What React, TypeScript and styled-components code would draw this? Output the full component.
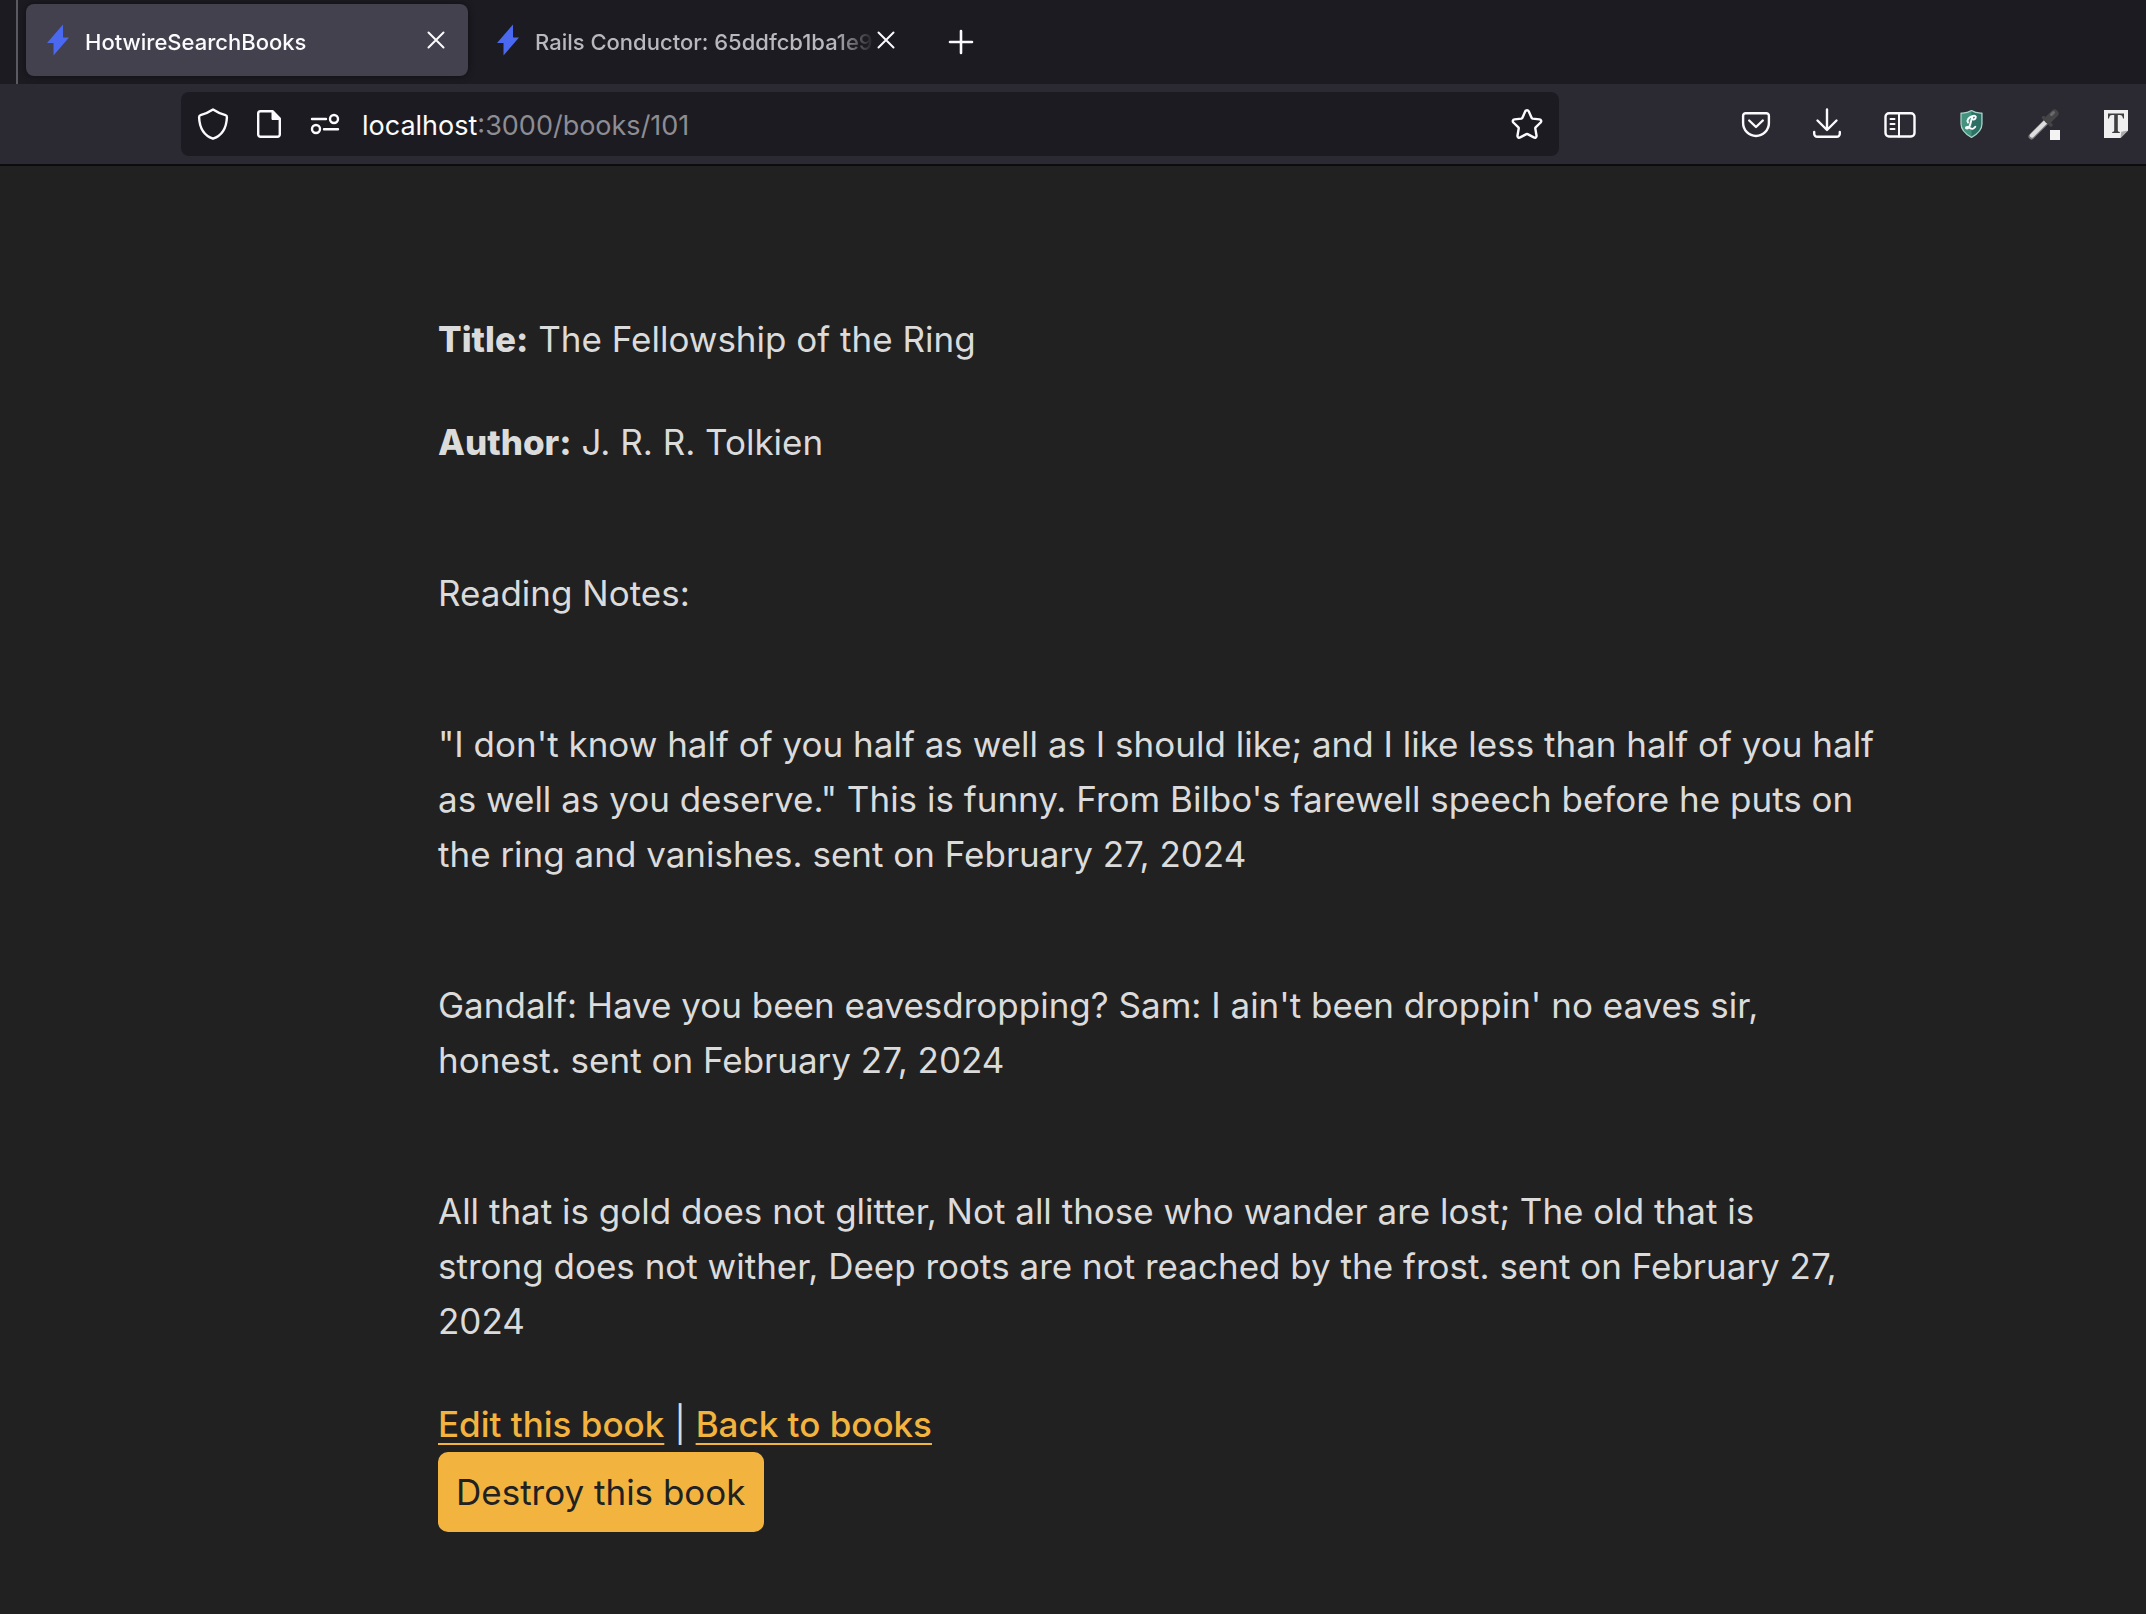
import React from "react";
import styled, { createGlobalStyle } from "styled-components";

const color = {
  frame: "#1c1b22",
  toolbar: "#2b2a33",
  tab: "#42414d",
  chromeText: "#fbfbfe",
  chromeMuted: "#b9b8bf",
  urlMuted: "#8d8d93",
  page: "#212121",
  text: "#dbdbdb",
  accent: "#f3b43f",
  bolt: "#4a69f0",
};

const GlobalStyle = createGlobalStyle`
  *, *::before, *::after { box-sizing: border-box; }
  body {
    margin: 0;
    background: ${color.page};
    color: ${color.text};
    font-family: Inter, "Liberation Sans", sans-serif;
  }
  button, input { font: inherit; color: inherit; }
`;

const Browser = styled.div`
  display: flex;
  flex-direction: column;
  min-height: 100vh;
  overflow-x: hidden;
`;

const TabStrip = styled.div`
  display: flex;
  height: 84px;
  padding-left: 16px;
  background: ${color.frame};
`;

const TabList = styled.div`
  display: flex;
  gap: 8px;
  padding: 4px 8px 8px;
  border-left: 2px solid #5b5a63;
`;

const Tab = styled.div<{ $active?: boolean }>`
  display: flex;
  align-items: center;
  gap: 11px;
  flex: 0 1 442px;
  width: 442px;
  height: 72px;
  padding: 0 16px;
  border-radius: 8px;
  background: ${(p) => (p.$active ? color.tab : "transparent")};
  box-shadow: ${(p) => (p.$active ? "0 0 6px rgba(0, 0, 0, 0.5)" : "none")};
  color: ${(p) => (p.$active ? color.chromeText : color.chromeMuted)};
`;

const TabTitle = styled.span`
  flex: 1;
  min-width: 0;
  margin-right: -16px;
  padding-top: 3px;
  overflow: hidden;
  white-space: nowrap;
  font-size: 22px;
  font-weight: 450;
  line-height: 32px;
  mask-image: linear-gradient(to left, transparent, #000 40px);
`;

const IconButton = styled.button<{ $width: number }>`
  display: flex;
  flex: none;
  align-items: center;
  justify-content: center;
  width: ${(p) => p.$width}px;
  padding: 0;
  border: 0;
  background: none;
  color: ${color.chromeText};
`;

const Toolbar = styled.div`
  display: flex;
  align-items: stretch;
  height: 82px;
  padding: 8px 0 8px 181px;
  border-bottom: 2px solid #0c0c0d;
  background: ${color.toolbar};
`;

const UrlBar = styled.div`
  display: flex;
  flex: 1;
  gap: 24px;
  min-width: 0;
  padding: 0 16px;
  border-radius: 8px;
  background: ${color.frame};
`;

const Address = styled.div`
  display: flex;
  flex: 1;
  align-items: center;
  min-width: 0;
  margin-left: -3px;
  padding-top: 3px;
  font-size: 27px;
  line-height: 32px;
`;

const Host = styled.label`
  color: ${color.chromeText};
`;

const UrlInput = styled.input`
  flex: 1;
  min-width: 0;
  padding: 0;
  border: 0;
  outline: 0;
  background: none;
  color: ${color.urlMuted};
`;

const Extensions = styled.div`
  display: flex;
  gap: 12px;
  margin-left: 167px;
`;

const Page = styled.main`
  padding: 146px 266px 82px 438px;
  font-size: 35px;
  line-height: 55px;
`;

const Field = styled.p`
  margin: 0 0 48px;
`;

const FieldName = styled.strong`
  font-weight: 800;
`;

const Notes = styled.section`
  display: grid;
  gap: 96px;
  margin: 96px 0 48px;
`;

const Note = styled.p`
  margin: 0;
`;

const Link = styled.a`
  color: ${color.accent};
  font-weight: 500;
  text-decoration: underline;
  text-decoration-thickness: 2px;
  text-underline-offset: 6px;
  text-decoration-skip-ink: none;
`;

const DestroyButton = styled.button`
  display: block;
  height: 80px;
  padding: 0 18px;
  border: 0;
  border-radius: 10px;
  background: ${color.accent};
  color: ${color.page};
`;

const Icon = styled.svg`
  flex: none;
`;

const Glyph = ({ children }: { children: React.ReactNode }) => (
  <Icon
    width="32"
    height="32"
    viewBox="0 0 32 32"
    fill="none"
    stroke="currentColor"
    strokeWidth="2.4"
    strokeLinecap="round"
    strokeLinejoin="round"
    aria-hidden="true"
  >
    {children}
  </Icon>
);

const Bolt = () => (
  <Glyph>
    <path
      d="M21 .5 5 19h6.500v12.500L27 13.500h-6z"
      fill={color.bolt}
      stroke="none"
    />
  </Glyph>
);

const Cross = () => (
  <Glyph>
    <path d="m8.500 8.500 15 15m0-15-15 15" strokeWidth="2" />
  </Glyph>
);

const BrowserTab = ({ title, active }: { title: string; active?: boolean }) => (
  <Tab $active={active} role="tab" aria-selected={!!active}>
    <Bolt />
    <TabTitle>{title}</TabTitle>
    <IconButton $width={32} aria-label="Close tab">
      <Cross />
    </IconButton>
  </Tab>
);

const notes = [
  "\"I don't know half of you half as well as I should like; and I like less than half of you half as well as you deserve.\" This is funny. From Bilbo's farewell speech before he puts on the ring and vanishes. sent on February 27, 2024",
  "Gandalf: Have you been eavesdropping? Sam: I ain't been droppin' no eaves sir, honest. sent on February 27, 2024",
  "All that is gold does not glitter, Not all those who wander are lost; The old that is strong\u00a0does not wither, Deep roots are not reached by the frost. sent on February 27, 2024",
];

export default function App() {
  return (
    <Browser>
      <GlobalStyle />
      <TabStrip>
        <TabList role="tablist">
          <BrowserTab title="HotwireSearchBooks" active />
          <BrowserTab title="Rails Conductor: 65ddfcb1ba1e9" />
        </TabList>
        <IconButton $width={70} aria-label="New tab">
          <Glyph>
            <path d="M16 5v22M5 16h22" strokeWidth="2.600" />
          </Glyph>
        </IconButton>
      </TabStrip>

      <Toolbar>
        <UrlBar>
          <IconButton $width={32} aria-label="Tracking protection">
            <Glyph>
              <path d="M16 1.500c4 2.700 8.500 4.500 12.500 5.700 1 .3 1.500 1 1.400 2C29.500 20 25 27.500 16 30.700 7 27.500 2.500 20 2.100 9.200c0-1 .4-1.700 1.400-2C7.500 6 12 4.200 16 1.500z" />
            </Glyph>
          </IconButton>
          <IconButton $width={32} aria-label="Page information">
            <Glyph>
              <path d="M19.500 3.200H7.500a2.300 2.300 0 0 0-2.300 2.300v21a2.300 2.300 0 0 0 2.300 2.300h17a2.300 2.300 0 0 0 2.300-2.300V10.500z" />
              <path d="M19 3v8.500h8z" fill="currentColor" strokeWidth="1" />
            </Glyph>
          </IconButton>
          <IconButton $width={32} aria-label="Site permissions">
            <Glyph>
              <circle cx="25" cy="11" r="4" />
              <circle cx="7" cy="21" r="4" />
              <path d="M3 11h14M15 21.300h14" />
            </Glyph>
          </IconButton>
          <Address>
            <Host htmlFor="address">localhost</Host>
            <UrlInput id="address" type="text" defaultValue=":3000/books/101" />
          </Address>
          <IconButton $width={32} aria-label="Bookmark this page">
            <Glyph>
              <path d="M14.300 3.300c.7-1.500 2.700-1.500 3.400 0l3 6.600c.2.400.5.600.9.700l6.900.8c1.700.2 2.300 2 1.100 3.100l-5 4.900c-.3.300-.4.700-.3 1.100l1.200 7c.3 1.700-1.300 2.700-2.700 1.900l-6.200-3.300c-.4-.2-.8-.2-1.200 0l-6.200 3.300c-1.400.8-3-.2-2.700-1.900l1.200-7c.1-.4 0-.8-.3-1.100l-5-4.900c-1.200-1.100-.6-2.900 1.100-3.100l6.900-.8c.4-.1.700-.3.900-.7z" />
            </Glyph>
          </IconButton>
        </UrlBar>

        <Extensions>
          <IconButton $width={60} aria-label="Save to Pocket">
            <Glyph>
              <path d="M5.700 5.200h20.600a2.600 2.600 0 0 1 2.600 2.600v7.300a12.900 12.900 0 0 1-25.800 0V7.800a2.600 2.600 0 0 1 2.600-2.600z" />
              <path d="m9.200 12.500 6.800 6.500 6.800-6.500" />
            </Glyph>
          </IconButton>
          <IconButton $width={60} aria-label="Downloads">
            <Glyph>
              <path d="M15 1.500v20M5.500 12.500l9.500 9.500 9.500-9.500M2.200 24v1.800a3 3 0 0 0 3 3h19.600a3 3 0 0 0 3-3V24" />
            </Glyph>
          </IconButton>
          <IconButton $width={60} aria-label="Sidebars">
            <Glyph>
              <rect x="1.500" y="5.200" width="29" height="23.300" rx="3.500" />
              <path d="M15 5v23.500" strokeWidth="2" />
              <path d="M6.500 11h4M6.500 16h4M6.500 21h4" strokeWidth="2" />
            </Glyph>
          </IconButton>
          <IconButton $width={60} aria-label="LeechBlock">
            <Glyph>
              <path
                d="M15.500 2.500c3 2 7 2.700 10.500 2.500v11c0 6-4.500 10-10.500 13.500C9.500 26 5 22 5 16V5c3.500.2 7.500-.5 10.500-2.500z"
                fill="#44937f"
                stroke="#a9d6ca"
                strokeWidth="1.200"
              />
              <path
                d="M15.500 3.500c3 1.800 6.500 2.400 9.500 2.400V16c0 5.500-4 9-9.500 12.300z"
                fill="#2d6f64"
                stroke="none"
              />
              <path
                d="M12 14.500c-1.500-2.500.8-5 4.200-6.300 2.600-1 4.300 0 3.400 1.800-.6 1.200-1.800 1.600-2.600 1.300M17 8.200c-2.200 2.200-1.600 8-4.400 11.500-1 1.300-2.700 1.200-2.700.1s2-1.300 4 .2 3.800 1.100 5.400-1.200"
                strokeWidth="1.900"
              />
            </Glyph>
          </IconButton>
          <IconButton $width={60} aria-label="Color picker">
            <Glyph>
              <path d="M3.500 28.500 18 14" stroke="#7d7d80" strokeWidth="6" />
              <path d="M4 27.500 18 13.500" stroke="#dedede" strokeWidth="4.200" />
              <path d="m15.500 9.500 7.500 7.500" stroke="#454547" strokeWidth="3.500" />
              <path d="m20.500 11.500 6-6" stroke="#454547" strokeWidth="8" />
              <path d="m23.500 6.500 2-2" stroke="#6a6a6c" strokeWidth="3" />
              <path d="M22 22h10v10H22z" fill="#f3f3f3" stroke="none" />
            </Glyph>
          </IconButton>
          <IconButton $width={60} aria-label="Text tools">
            <Glyph>
              <path d="M4 2h24v20.500L20.500 30H4z" fill="#efefef" stroke="none" />
              <path d="M28 22.500 20.500 30l.8-6.200z" fill="#a9a9a9" stroke="none" />
              <path
                d="M8 5.500h16v5h-1c-.4-2.300-1.200-3.400-3.200-3.400h-2v15.200c0 1.200.5 1.600 2 1.800v1h-7.600v-1c1.500-.2 2-.6 2-1.800V7.100h-2c-2 0-2.800 1.100-3.200 3.400H8z"
                fill="#3f3f42"
                stroke="none"
              />
            </Glyph>
          </IconButton>
        </Extensions>
      </Toolbar>

      <Page>
        <Field>
          <FieldName>Title:</FieldName> The Fellowship of the Ring
        </Field>
        <Field>
          <FieldName>Author:</FieldName> J. R. R. Tolkien
        </Field>
        <Notes>
          <Note>Reading Notes:</Note>
          {notes.map((note) => (
            <Note key={note}>{note}</Note>
          ))}
        </Notes>
        <nav>
          <Link href="#edit">Edit this book</Link> | <Link href="#books">Back to books</Link>
        </nav>
        <DestroyButton type="button">Destroy this book</DestroyButton>
      </Page>
    </Browser>
  );
}
